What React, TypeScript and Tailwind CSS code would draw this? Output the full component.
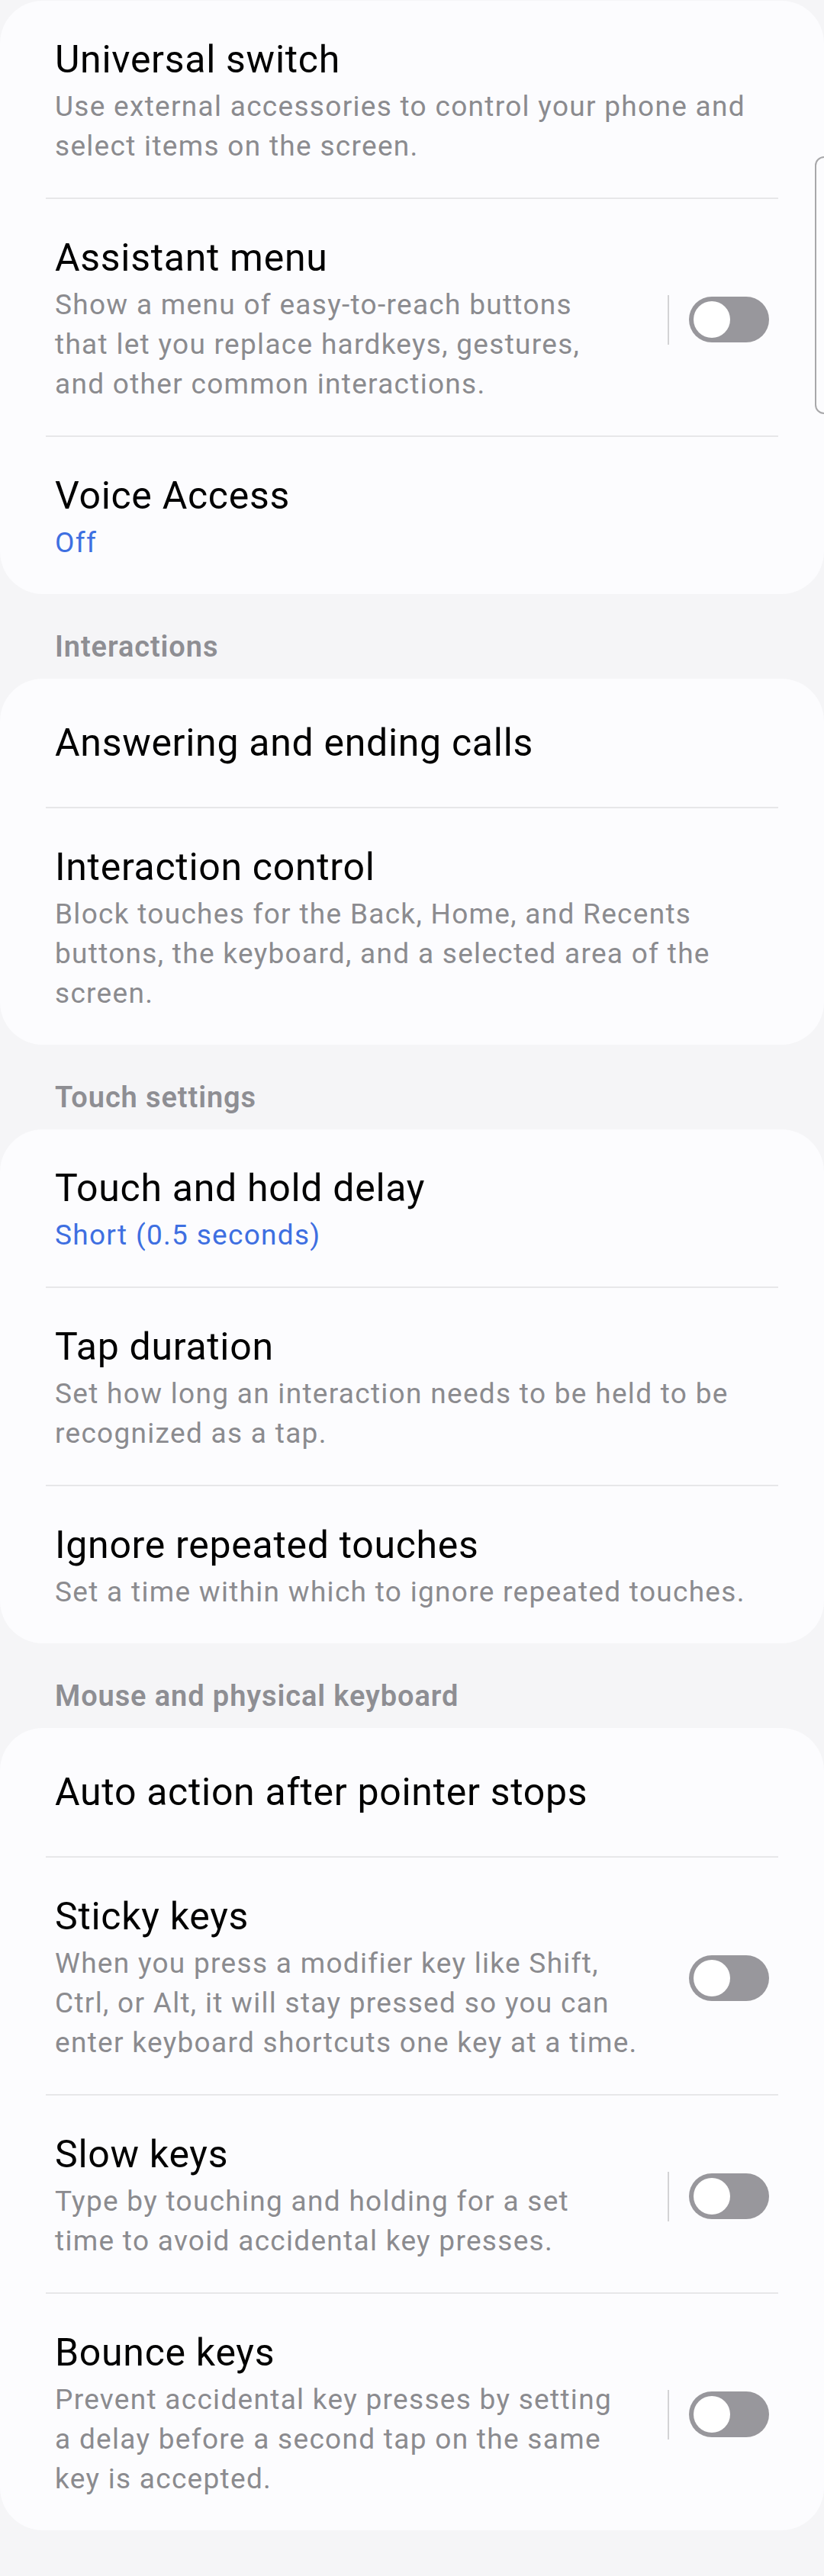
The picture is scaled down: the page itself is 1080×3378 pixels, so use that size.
import React from 'react'

type Row = {
  title: string
  lines?: string[]
  summary?: string
  toggle?: 'plain' | 'divided'
}

type Section = {
  header?: string
  rows: Row[]
}

const sections: Section[] = [
  {
    rows: [
      {
        title: 'Universal switch',
        lines: ['Use external accessories to control your phone and', 'select items on the screen.'],
      },
      {
        title: 'Assistant menu',
        lines: [
          'Show a menu of easy-to-reach buttons',
          'that let you replace hardkeys, gestures,',
          'and other common interactions.',
        ],
        toggle: 'divided',
      },
      { title: 'Voice Access', summary: 'Off' },
    ],
  },
  {
    header: 'Interactions',
    rows: [
      { title: 'Answering and ending calls' },
      {
        title: 'Interaction control',
        lines: [
          'Block touches for the Back, Home, and Recents',
          'buttons, the keyboard, and a selected area of the',
          'screen.',
        ],
      },
    ],
  },
  {
    header: 'Touch settings',
    rows: [
      { title: 'Touch and hold delay', summary: 'Short (0.5 seconds)' },
      {
        title: 'Tap duration',
        lines: ['Set how long an interaction needs to be held to be', 'recognized as a tap.'],
      },
      {
        title: 'Ignore repeated touches',
        lines: ['Set a time within which to ignore repeated touches.'],
      },
    ],
  },
  {
    header: 'Mouse and physical keyboard',
    rows: [
      { title: 'Auto action after pointer stops' },
      {
        title: 'Sticky keys',
        lines: [
          'When you press a modifier key like Shift,',
          'Ctrl, or Alt, it will stay pressed so you can',
          'enter keyboard shortcuts one key at a time.',
        ],
        toggle: 'plain',
      },
      {
        title: 'Slow keys',
        lines: ['Type by touching and holding for a set', 'time to avoid accidental key presses.'],
        toggle: 'divided',
      },
      {
        title: 'Bounce keys',
        lines: [
          'Prevent accidental key presses by setting',
          'a delay before a second tap on the same',
          'key is accepted.',
        ],
        toggle: 'divided',
      },
    ],
  },
]

function Switch() {
  return (
    <div className="relative h-[60px] w-[105px] shrink-0 rounded-full bg-[#98979c]">
      <div className="absolute left-[6px] top-[6px] h-[48px] w-[48px] rounded-full bg-white" />
    </div>
  )
}

function SettingRow({ row }: { row: Row }) {
  const single = !row.lines && !row.summary
  return (
    <div className={`flex items-center px-[72px] ${single ? 'py-[54px]' : 'pt-[47px] pb-[41px]'}`}>
      <div className="min-w-0 flex-1">
        <div className="text-[50px] leading-[60px] tracking-[0.7px] text-black whitespace-nowrap">{row.title}</div>
        {row.summary && (
          <div className="mt-[6px] text-[37px] leading-[52px] tracking-[1.3px] text-[#3e6fe1]">{row.summary}</div>
        )}
        {row.lines && (
          <div className="mt-[6px] text-[37px] leading-[52px] tracking-[1.3px] text-[#8b8b8f]">
            {row.lines.map((line) => (
              <div key={line} className="whitespace-nowrap">
                {line}
              </div>
            ))}
          </div>
        )}
      </div>
      {row.toggle === 'divided' && <div className="mr-[26px] h-[65px] w-[2px] bg-[#d3d3d5]" />}
      {row.toggle && <Switch />}
    </div>
  )
}

export default function App() {
  return (
    <div className="relative min-h-screen overflow-hidden bg-[#f5f5f7] pt-[1px] font-['Roboto','Noto_Sans',sans-serif] antialiased">
      {sections.map((section, i) => (
        <div key={i}>
          {section.header && (
            <div className="px-[72px] pt-[46px] pb-[19px] text-[38px] leading-[46px] tracking-[0.9px] font-semibold text-[#8e8e93]">
              {section.header}
            </div>
          )}
          <div className="rounded-[56px] bg-[#fcfcfe]">
            {section.rows.map((row, j) => (
              <div key={row.title}>
                {j > 0 && <div className="mx-[60px] h-[2px] bg-[#e7e7e9]" />}
                <SettingRow row={row} />
              </div>
            ))}
          </div>
        </div>
      ))}

      {/* scroll indicator peeking in from the right edge */}
      <div className="absolute left-[1068px] top-[205px] h-[338px] w-[30px] rounded-[12px] border-2 border-[#a8a8aa]" />
    </div>
  )
}
